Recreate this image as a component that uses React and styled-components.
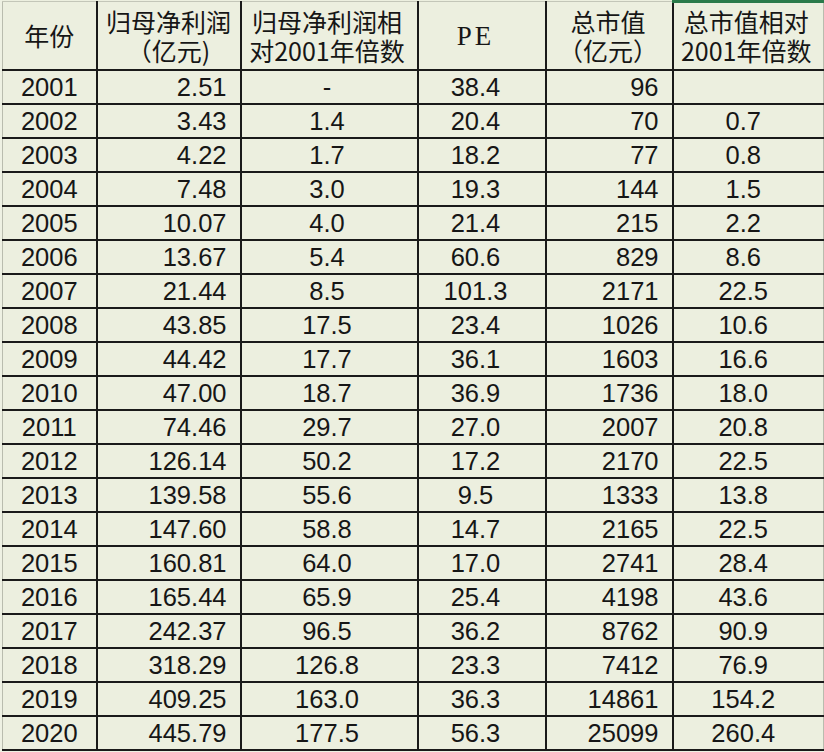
import React from "react";
import styled, { createGlobalStyle } from "styled-components";

const Global = createGlobalStyle`
  html, body { margin: 0; padding: 0; background: #eef1e3; }
  body { width: 824px; height: 752px; overflow: hidden; }
`;

const Sheet = styled.div`
  width: 824px;
  height: 752px;
  padding: 0 1px 0 2px;
  box-sizing: border-box;
  background: #eef1e3;
`;

const Table = styled.table`
  width: 821px;
  table-layout: fixed;
  border-collapse: collapse;
  border: none;
  background: #ecefdf;
  color: #161616;
`;

const Col = styled.col``;

const HeadCell = styled.th`
  height: 66px;
  padding: 0 ${(p) => p.$pr || 0}px 0 0;
  border: 2px solid #1a1a1a;
  border-top: ${(p) => (p.$selected ? "3px solid #2a7a4a" : "1px solid #c3c6b8")};
  font-family: "Noto Sans CJK SC", "Noto Sans", sans-serif;
  font-weight: 400;
  font-size: 25px;
  line-height: 29px;
  text-align: center;
  vertical-align: middle;
  white-space: pre-line;
  &:first-child { border-left: 1px solid #b9bcae; }
  &:last-child { border-right: 1px solid #b9bcae; }
`;

const PEText = styled.span`
  font-family: "Liberation Serif", "DejaVu Serif", serif;
  font-size: 27px;
  letter-spacing: 3px;
`;

const Cell = styled.td`
  height: 32px;
  padding: 0 ${(p) => p.$pr || 0}px 0 0;
  border: 2px solid #1a1a1a;
  font-family: "Liberation Sans", Arial, sans-serif;
  font-size: 25.5px;
  line-height: 30px;
  text-align: ${(p) => p.$align || "center"};
  vertical-align: middle;
  white-space: nowrap;
  &:first-child { border-left: 1px solid #b9bcae; }
  &:last-child { border-right: 1px solid #b9bcae; }
`;

const rows = [
  ["2001", "2.51", "-", "38.4", "96", ""],
  ["2002", "3.43", "1.4", "20.4", "70", "0.7"],
  ["2003", "4.22", "1.7", "18.2", "77", "0.8"],
  ["2004", "7.48", "3.0", "19.3", "144", "1.5"],
  ["2005", "10.07", "4.0", "21.4", "215", "2.2"],
  ["2006", "13.67", "5.4", "60.6", "829", "8.6"],
  ["2007", "21.44", "8.5", "101.3", "2171", "22.5"],
  ["2008", "43.85", "17.5", "23.4", "1026", "10.6"],
  ["2009", "44.42", "17.7", "36.1", "1603", "16.6"],
  ["2010", "47.00", "18.7", "36.9", "1736", "18.0"],
  ["2011", "74.46", "29.7", "27.0", "2007", "20.8"],
  ["2012", "126.14", "50.2", "17.2", "2170", "22.5"],
  ["2013", "139.58", "55.6", "9.5", "1333", "13.8"],
  ["2014", "147.60", "58.8", "14.7", "2165", "22.5"],
  ["2015", "160.81", "64.0", "17.0", "2741", "28.4"],
  ["2016", "165.44", "65.9", "25.4", "4198", "43.6"],
  ["2017", "242.37", "96.5", "36.2", "8762", "90.9"],
  ["2018", "318.29", "126.8", "23.3", "7412", "76.9"],
  ["2019", "409.25", "163.0", "36.3", "14861", "154.2"],
  ["2020", "445.79", "177.5", "56.3", "25099", "260.4"],
];

const columns = [
  { width: 94, align: "center", pr: 0 },
  { width: 144, align: "right", pr: 13 },
  { width: 177, align: "center", pr: 4 },
  { width: 128, align: "center", pr: 12 },
  { width: 127, align: "right", pr: 13 },
  { width: 151, align: "center", pr: 10 },
];

export default function App() {
  return (
    <>
      <Global />
      <Sheet>
        <Table>
          <colgroup>
            {columns.map((c, i) => (
              <Col key={i} style={{ width: c.width }} />
            ))}
          </colgroup>
          <thead>
            <tr>
              <HeadCell>年份</HeadCell>
              <HeadCell>{"归母净利润\n（亿元)"}</HeadCell>
              <HeadCell $pr={4}>{"归母净利润相\n对2001年倍数"}</HeadCell>
              <HeadCell $pr={12}>
                <PEText>PE</PEText>
              </HeadCell>
              <HeadCell $pr={2}>{"总市值\n（亿元）"}</HeadCell>
              <HeadCell $selected $pr={4}>{"总市值相对\n2001年倍数"}</HeadCell>
            </tr>
          </thead>
          <tbody>
            {rows.map((r) => (
              <tr key={r[0]}>
                {r.map((v, i) => (
                  <Cell key={i} $align={columns[i].align} $pr={columns[i].pr}>
                    {v}
                  </Cell>
                ))}
              </tr>
            ))}
          </tbody>
        </Table>
      </Sheet>
    </>
  );
}
